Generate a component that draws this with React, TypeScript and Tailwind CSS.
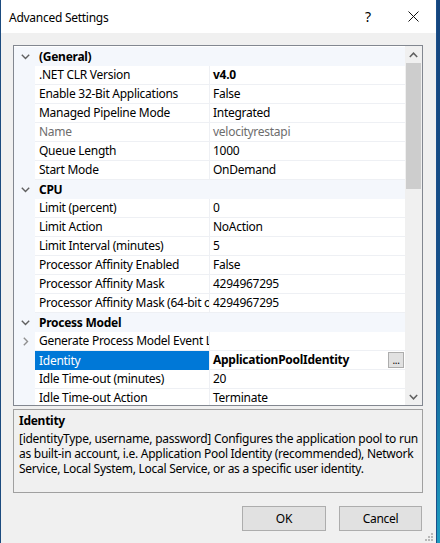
import React from "react";

type Row =
  | { kind: "cat"; label: string }
  | {
      kind: "prop";
      name: string;
      value: string;
      bold?: boolean;
      muted?: boolean;
      selected?: boolean;
      expandable?: boolean;
      button?: boolean;
    };

const rows: Row[] = [
  { kind: "cat", label: "(General)" },
  { kind: "prop", name: ".NET CLR Version", value: "v4.0", bold: true },
  { kind: "prop", name: "Enable 32-Bit Applications", value: "False" },
  { kind: "prop", name: "Managed Pipeline Mode", value: "Integrated" },
  { kind: "prop", name: "Name", value: "velocityrestapi", muted: true },
  { kind: "prop", name: "Queue Length", value: "1000" },
  { kind: "prop", name: "Start Mode", value: "OnDemand" },
  { kind: "cat", label: "CPU" },
  { kind: "prop", name: "Limit (percent)", value: "0" },
  { kind: "prop", name: "Limit Action", value: "NoAction" },
  { kind: "prop", name: "Limit Interval (minutes)", value: "5" },
  { kind: "prop", name: "Processor Affinity Enabled", value: "False" },
  { kind: "prop", name: "Processor Affinity Mask", value: "4294967295" },
  { kind: "prop", name: "Processor Affinity Mask (64-bit option)", value: "4294967295" },
  { kind: "cat", label: "Process Model" },
  { kind: "prop", name: "Generate Process Model Event Log Entry", value: "", expandable: true },
  { kind: "prop", name: "Identity", value: "ApplicationPoolIdentity", bold: true, selected: true, button: true },
  { kind: "prop", name: "Idle Time-out (minutes)", value: "20" },
  { kind: "prop", name: "Idle Time-out Action", value: "Terminate" },
];

function ChevronDown() {
  return (
    <svg width="9" height="6" viewBox="0 0 9 6" fill="none">
      <path d="M0.8 0.8 L4.5 4.5 L8.2 0.8" stroke="#606060" strokeWidth="1.4" />
    </svg>
  );
}

function ChevronRight() {
  return (
    <svg width="6" height="9" viewBox="0 0 6 9" fill="none">
      <path d="M0.8 0.8 L4.5 4.5 L0.8 8.2" stroke="#909090" strokeWidth="1.4" />
    </svg>
  );
}

function GridRow({ row }: { row: Row }) {
  if (row.kind === "cat") {
    return (
      <div className="flex h-[19px] shrink-0 items-center bg-[#f4f7fc]">
        <div className="flex w-[21px] shrink-0 justify-center pl-px">
          <ChevronDown />
        </div>
        <span className="pl-1 font-bold text-black">{row.label}</span>
      </div>
    );
  }
  return (
    <div className="flex h-[19px] shrink-0">
      <div className="flex w-[21px] shrink-0 items-center justify-center bg-[#f4f7fc] pl-[3px]">
        {row.expandable && <ChevronRight />}
      </div>
      <div
        className={
          row.selected
            ? "flex w-[174px] shrink-0 items-center overflow-hidden whitespace-nowrap bg-[#0078d7] pl-1 text-white"
            : "flex w-[174px] shrink-0 items-center overflow-hidden whitespace-nowrap border-b border-[#eef0f4] pl-1 " +
              (row.muted ? "text-[#6d6d6d]" : "text-black")
        }
      >
        {row.name}
      </div>
      <div className="w-px shrink-0 bg-[#eef0f4]" />
      <div className="flex flex-1 items-center justify-between overflow-hidden whitespace-nowrap border-b border-[#eef0f4] pl-[3px] pr-px">
        <span className={(row.bold ? "font-bold " : "") + (row.muted ? "text-[#6d6d6d]" : "text-black")}>{row.value}</span>
        {row.button && (
          <div className="flex h-[16px] w-[16px] items-end justify-center border border-[#adadad] bg-[#e1e1e1] pb-[2px] text-[10px] leading-none text-black">
            ...
          </div>
        )}
      </div>
    </div>
  );
}

function ScrollBar() {
  return (
    <div className="flex w-[17px] shrink-0 flex-col bg-[#f0f0f0]">
      <div className="flex h-[17px] items-center justify-center">
        <svg width="9" height="6" viewBox="0 0 9 6" fill="none">
          <path d="M0.8 5 L4.5 1.2 L8.2 5" stroke="#606060" strokeWidth="1.5" />
        </svg>
      </div>
      <div className="mx-px h-[126px] bg-[#cdcdcd]" />
      <div className="flex-1" />
      <div className="flex h-[17px] items-center justify-center">
        <svg width="9" height="6" viewBox="0 0 9 6" fill="none">
          <path d="M0.8 1 L4.5 4.8 L8.2 1" stroke="#606060" strokeWidth="1.5" />
        </svg>
      </div>
    </div>
  );
}

function Grip() {
  const dots = [
    [6, 0],
    [3, 3],
    [6, 3],
    [0, 6],
    [3, 6],
    [6, 6],
  ];
  return (
    <svg width="8" height="8" viewBox="0 0 8 8">
      {dots.map(([x, y]) => (
        <rect key={`${x}-${y}`} x={x} y={y} width="2" height="2" fill="#b8b8b8" />
      ))}
    </svg>
  );
}

export default function App() {
  return (
    <div
      className="flex h-[543px] w-[440px] overflow-hidden bg-[#1c4b7f] text-[12px] leading-none tracking-[-0.27px]"
      style={{ fontFamily: '"Noto Sans", "Segoe UI", sans-serif' }}
    >
      <div className="ml-px flex w-[435px] shrink-0 flex-col bg-[#f0f0f0]">
        {/* title bar */}
        <div className="flex h-[33px] shrink-0 items-center bg-white pl-2 text-black">
          <span className="flex-1 pt-[2px]">Advanced Settings</span>
          <span className="w-[12px] pt-[1px] text-[14px]">?</span>
          <div className="ml-[31px] mr-[17px] flex items-center">
            <svg width="11" height="11" viewBox="0 0 11 11" fill="none">
              <path d="M0.5 0.5 L10.5 10.5 M10.5 0.5 L0.5 10.5" stroke="#111" strokeWidth="1" />
            </svg>
          </div>
        </div>

        {/* property grid */}
        <div className="ml-3 mt-3 flex h-[361px] w-[410px] shrink-0 border border-[#828790] bg-white">
          <div className="flex flex-1 flex-col overflow-hidden pt-px">
            {rows.map((r, i) => (
              <GridRow key={i} row={r} />
            ))}
          </div>
          <ScrollBar />
        </div>

        {/* description */}
        <div className="ml-3 mt-[3px] flex h-[84px] w-[410px] shrink-0 flex-col overflow-hidden border border-[#a0a0a0] px-[5px] pt-[5px] text-black">
          <div className="font-bold">Identity</div>
          <div className="mt-[4px] whitespace-nowrap leading-[15px]">
            <div>[identityType, username, password] Configures the application pool to run</div>
            <div>as built-in account, i.e. Application Pool Identity (recommended), Network</div>
            <div>Service, Local System, Local Service, or as a specific user identity.</div>
          </div>
        </div>

        {/* buttons */}
        <div className="ml-[241px] mt-[13px] flex gap-[13px]">
          <button className="flex h-[25px] w-[84px] items-center justify-center border border-[#adadad] bg-[#e1e1e1] text-black">
            OK
          </button>
          <button className="flex h-[25px] w-[83px] items-center justify-center border border-[#adadad] bg-[#e1e1e1] text-black">
            Cancel
          </button>
        </div>
        <div className="mr-[3px] mt-[2px] flex justify-end">
          <Grip />
        </div>
      </div>
      <div className="w-px shrink-0 bg-[#1b4f8a]" />
      <div className="flex-1 bg-gradient-to-b from-[#15457d] via-[#15508a] to-[#1e9cc0]" />
    </div>
  );
}
